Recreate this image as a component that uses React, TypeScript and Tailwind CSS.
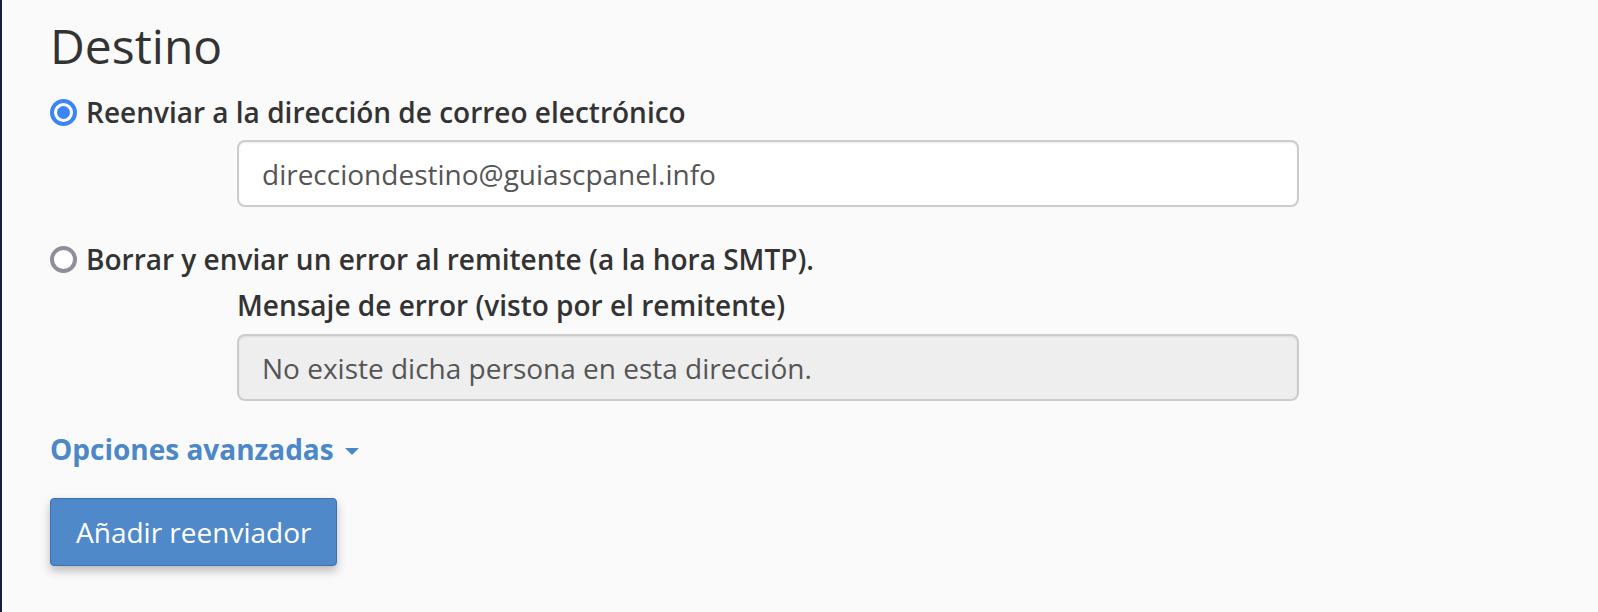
import React from 'react';

const font = "font-['Open_Sans',_'Liberation_Sans',_sans-serif]";

const Radio: React.FC<{ checked?: boolean }> = ({ checked }) =>
  checked ? (
    <span className="w-[27px] h-[27px] rounded-full border-[4px] border-[#3a86f7] bg-white flex items-center justify-center shrink-0">
      <span className="w-[13px] h-[13px] rounded-full bg-[#3a86f7]" />
    </span>
  ) : (
    <span className="w-[27px] h-[27px] rounded-full border-[4px] border-[#8f8f9c] bg-white shrink-0" />
  );

export default function App() {
  return (
    <div className={`${font} w-[1598px] h-[612px] bg-[#fafafa] border-l-[2px] border-[#14203f] overflow-hidden`}>
      <div className="pl-[48px] pt-[19px]">
        {/* Heading */}
        <h2 className="text-[48px] leading-[53px] font-normal text-[#333333]">Destino</h2>

        {/* Forward to address */}
        <label className="mt-[20px] flex items-center gap-[9px] text-[28px] leading-[40px] font-semibold text-[#333333]">
          <Radio checked />
          Reenviar a la dirección de correo electrónico
        </label>
        <div className="pl-[187px] mt-[8px]">
          <input
            readOnly
            value="direcciondestino@guiascpanel.info"
            className="w-[1062px] h-[67px] px-[23px] text-[28px] leading-[40px] text-[#555555] bg-white border-[2px] border-[#cccccc] rounded-[8px] shadow-[inset_0_1px_2px_rgba(0,0,0,0.08)] outline-none"
          />
        </div>

        {/* Discard with error */}
        <label className="mt-[32px] flex items-center gap-[9px] text-[28px] leading-[40px] font-semibold text-[#333333]">
          <Radio />
          Borrar y enviar un error al remitente (a la hora SMTP).
        </label>
        <div className="pl-[187px] mt-[6px]">
          <div className="text-[28px] leading-[40px] font-semibold text-[#333333]">
            Mensaje de error (visto por el remitente)
          </div>
          <input
            readOnly
            value="No existe dicha persona en esta dirección."
            className="mt-[9px] w-[1062px] h-[67px] px-[23px] text-[28px] leading-[40px] text-[#555555] bg-[#eeeeee] border-[2px] border-[#cccccc] rounded-[8px] shadow-[inset_0_1px_2px_rgba(0,0,0,0.08)] outline-none"
          />
        </div>

        {/* Advanced options */}
        <div className="mt-[28px] flex items-center gap-[11px] text-[28px] leading-[40px] font-bold text-[#4c87c8]">
          <span>Opciones avanzadas</span>
          <span className="mt-[4px] w-0 h-0 border-l-[7px] border-r-[7px] border-t-[7px] border-l-transparent border-r-transparent border-t-[#4c87c8]" />
        </div>

        {/* Submit */}
        <button className="mt-[29px] h-[68px] px-[25px] text-[28px] leading-[40px] text-white bg-[#4f89c9] border border-[#3d70b0] rounded-[4px] shadow-[0_5px_10px_rgba(0,0,0,0.25)]">
          Añadir reenviador
        </button>
      </div>
    </div>
  );
}
